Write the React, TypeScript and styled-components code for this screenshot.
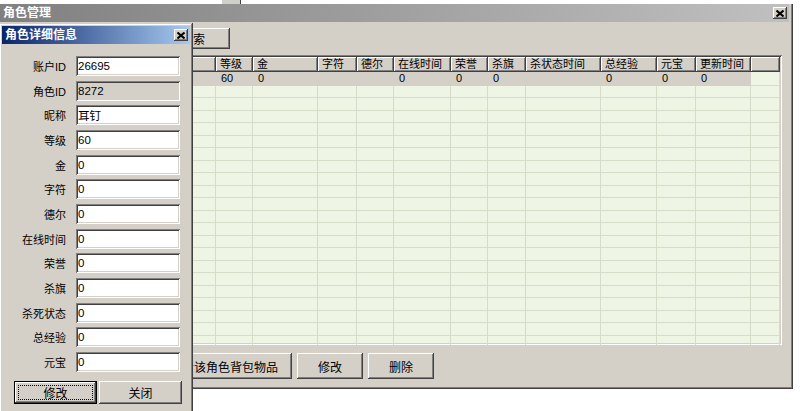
import React from 'react';
import styled, { createGlobalStyle, css } from 'styled-components';

const GlobalStyle = createGlobalStyle`
  html, body {
    margin: 0;
    padding: 0;
    background: #fff;
  }
  body {
    font-family: "Liberation Sans", "Noto Sans CJK SC", sans-serif;
    font-size: 11px;
    color: #000;
  }
`;

const raised = css`
  background: #d4d0c8;
  box-shadow: inset -1px -1px #404040, inset 1px 1px #fff, inset -2px -2px #808080, inset 2px 2px #d4d0c8;
`;

const sunken = css`
  box-shadow: inset 1px 1px #808080, inset -1px -1px #fff, inset 2px 2px #404040, inset -2px -2px #d4d0c8;
`;

const Desktop = styled.div`
  position: relative;
  width: 800px;
  height: 411px;
  overflow: hidden;
  background: #fff;
`;

const TopStrip = styled.div`
  height: 4px;
  display: flex;
`;

const Grip = styled.div`
  margin-left: 222px;
  width: 18px;
  background: #cfcfcb;
  border-right: 1px solid #404040;
`;

const Window = styled.div`
  margin-left: -4px;
  width: 797px;
  height: 385px;
  box-sizing: border-box;
  padding: 0 4px 4px 4px;
  background: #d4d0c8;
  box-shadow: inset -1px -1px #404040, inset -2px -2px #808080;
  display: flex;
  flex-direction: column;
`;

const TitleBar = styled.div<{ $active?: boolean }>`
  height: 18px;
  flex-shrink: 0;
  display: flex;
  align-items: center;
  padding: 0 2px 0 3px;
  background: ${p => (p.$active
    ? 'linear-gradient(to right, #0a246a, #a6caf0)'
    : 'linear-gradient(to right, #808080, #c0c0c0)')};
`;

const TitleText = styled.span`
  flex: 1;
  color: #fff;
  font-weight: bold;
  font-size: 12px;
  line-height: 18px;
  white-space: nowrap;
`;

const CloseButton = styled.button`
  ${raised};
  width: 14px;
  height: 12px;
  padding: 0;
  border: none;
  display: flex;
  align-items: center;
  justify-content: center;
  flex-shrink: 0;
`;

const Client = styled.div`
  flex: 1;
  display: flex;
  flex-direction: column;
  padding: 6px 7px 0 8px;
`;

const SearchRow = styled.div`
  display: flex;
  align-items: center;
  height: 21px;
  padding-left: 148px;
`;

const Button = styled.button<{ $w: number; $h: number; $default?: boolean }>`
  ${raised};
  width: ${p => p.$w}px;
  height: ${p => p.$h}px;
  border: none;
  padding: 0;
  font-family: "Liberation Sans", "Noto Sans CJK SC", sans-serif;
  font-size: 12px;
  color: #000;
  white-space: nowrap;
  overflow: hidden;
  position: relative;
  ${p => p.$default && css`
    box-shadow: inset 0 0 0 1px #000, inset -2px -2px #404040, inset 2px 2px #fff, inset -3px -3px #808080;
    &::after {
      content: '';
      position: absolute;
      inset: 4px;
      border: 1px dotted #000;
    }
  `}
`;

const ListView = styled.div`
  ${sunken};
  margin-top: 6px;
  height: 290px;
  box-sizing: border-box;
  padding: 2px;
  background: #eef5e5;
  overflow: hidden;
`;

const Grid = styled.table`
  border-collapse: separate;
  border-spacing: 0;
  table-layout: fixed;
  width: 770px;
`;

const HeadCell = styled.th`
  ${raised};
  height: 15px;
  padding: 0 0 0 4px;
  text-align: left;
  font-weight: normal;
  font-size: 11px;
  line-height: 15px;
  white-space: nowrap;
  overflow: hidden;
`;

const Cell = styled.td<{ $selected?: boolean }>`
  height: 11.5px;
  padding: 0 0 0 5px;
  font-size: 11px;
  line-height: 11.5px;
  white-space: nowrap;
  overflow: hidden;
  border-right: 1px solid #d5dcc8;
  border-bottom: 1px solid #d5dcc8;
  ${p => p.$selected && css`
    background: #d4d0c8;
    border-color: #d4d0c8;
    height: 12.5px;
  `}
`;

const ButtonRow = styled.div`
  display: flex;
  gap: 5px;
  margin-top: 8px;
  padding-left: 148px;
`;

const Dialog = styled.div`
  position: absolute;
  left: -1px;
  top: 23px;
  width: 194px;
  height: 400px;
  box-sizing: border-box;
  padding: 3px;
  background: #d4d0c8;
  box-shadow: inset -1px -1px #404040, inset 1px 1px #d4d0c8, inset -2px -2px #808080, inset 2px 2px #fff;
  display: flex;
  flex-direction: column;
`;

const FieldGrid = styled.div`
  display: grid;
  grid-template-columns: 64px 104px;
  column-gap: 10px;
  row-gap: 4.67px;
  align-items: center;
  padding-top: 12px;
`;

const FieldLabel = styled.label`
  text-align: right;
  font-size: 11px;
  white-space: nowrap;
`;

const FieldInput = styled.input<{ $locked?: boolean }>`
  ${sunken};
  height: 20px;
  box-sizing: border-box;
  border: none;
  padding: 0 2px;
  background: ${p => (p.$locked ? '#d4d0c8' : '#fff')};
  font-family: "Liberation Sans", "Noto Sans CJK SC", sans-serif;
  font-size: 11.5px;
  color: #000;
  outline: none;
`;

const DialogButtons = styled.div`
  display: flex;
  gap: 2px;
  margin-top: 9px;
  padding-left: 12px;
`;

const CloseGlyph = () => (
  <svg width="8" height="7" viewBox="0 0 8 7">
    <path d="M0.5 0.5 L7.5 6.5 M7.5 0.5 L0.5 6.5" stroke="#000" strokeWidth="2" />
  </svg>
);

// first column holds the account / role / nickname block, which sits under the detail dialog
const columns: [string, number][] = [
  ['', 206], ['等级', 37], ['金', 65], ['字符', 39],
  ['德尔', 37], ['在线时间', 57], ['荣誉', 37], ['杀旗', 38], ['杀状态时间', 75],
  ['总经验', 56], ['元宝', 39], ['更新时间', 55], ['', 29],
];

const firstRow = ['', '60', '0', '', '', '0', '0', '0', '', '0', '0', '0'];

const fields: { label: string; value: string; locked?: boolean }[] = [
  { label: '账户ID', value: '26695' },
  { label: '角色ID', value: '8272', locked: true },
  { label: '昵称', value: '耳钉' },
  { label: '等级', value: '60' },
  { label: '金', value: '0' },
  { label: '字符', value: '0' },
  { label: '德尔', value: '0' },
  { label: '在线时间', value: '0' },
  { label: '荣誉', value: '0' },
  { label: '杀旗', value: '0' },
  { label: '杀死状态', value: '0' },
  { label: '总经验', value: '0' },
  { label: '元宝', value: '0' },
];

const emptyRows = Array.from({ length: 21 });

const App: React.FC = () => {
  return (
    <Desktop>
      <GlobalStyle />
      <TopStrip>
        <Grip />
      </TopStrip>
      <Window>
        <TitleBar>
          <TitleText>角色管理</TitleText>
          <CloseButton><CloseGlyph /></CloseButton>
        </TitleBar>
        <Client>
          <SearchRow>
            <Button $w={74} $h={21}>搜索</Button>
          </SearchRow>
          <ListView>
            <Grid>
              <colgroup>
                {columns.map(([, w], i) => <col key={i} style={{ width: w }} />)}
              </colgroup>
              <thead>
                <tr>
                  {columns.map(([name], i) => <HeadCell key={i}>{name}</HeadCell>)}
                </tr>
              </thead>
              <tbody>
                <tr>
                  {firstRow.map((v, i) => <Cell key={i} $selected>{v}</Cell>)}
                  <Cell />
                </tr>
                {emptyRows.map((_, r) => (
                  <tr key={r}>
                    {columns.map((_, i) => <Cell key={i} />)}
                  </tr>
                ))}
              </tbody>
            </Grid>
          </ListView>
          <ButtonRow>
            <Button $w={136} $h={26}>查看该角色背包物品</Button>
            <Button $w={66} $h={26}>修改</Button>
            <Button $w={66} $h={26}>删除</Button>
          </ButtonRow>
        </Client>
      </Window>

      <Dialog>
        <TitleBar $active>
          <TitleText>角色详细信息</TitleText>
          <CloseButton><CloseGlyph /></CloseButton>
        </TitleBar>
        <FieldGrid>
          {fields.map(f => (
            <React.Fragment key={f.label}>
              <FieldLabel>{f.label}</FieldLabel>
              <FieldInput defaultValue={f.value} readOnly={f.locked} $locked={f.locked} />
            </React.Fragment>
          ))}
        </FieldGrid>
        <DialogButtons>
          <Button $w={83} $h={23} $default>修改</Button>
          <Button $w={83} $h={23}>关闭</Button>
        </DialogButtons>
      </Dialog>
    </Desktop>
  );
};

export default App;
